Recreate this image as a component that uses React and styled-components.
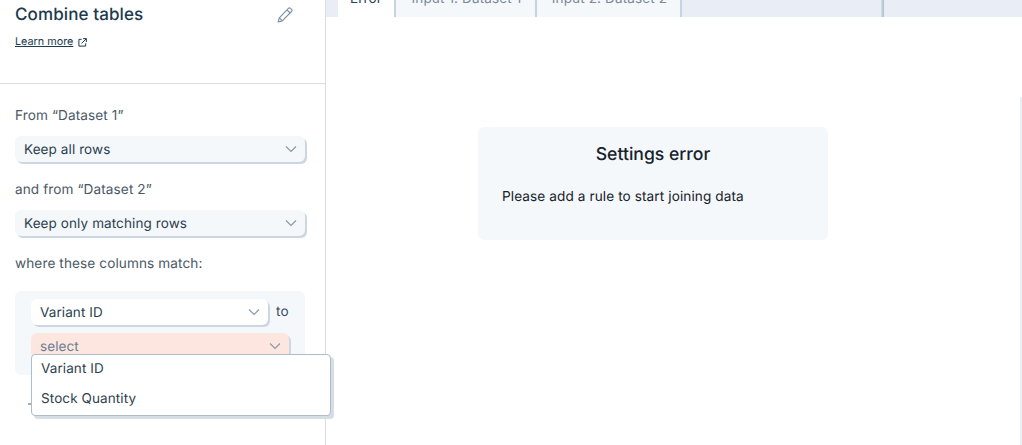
import React from "react";
import styled, { createGlobalStyle } from "styled-components";

const Global = createGlobalStyle`
  html, body { margin: 0; padding: 0; background: #fff; overflow: hidden; }
  body { font-family: Inter, "Liberation Sans", sans-serif; text-rendering: geometricPrecision; letter-spacing: 0.1px; }
`;

const Page = styled.div`
  display: flex;
  width: 1022px;
  height: 445px;
  overflow: hidden;
`;

const Sidebar = styled.aside`
  width: 325px;
  flex: none;
  border-right: 1px solid #d9dde1;
  display: flex;
  flex-direction: column;
`;

const Header = styled.header`
  height: 84px;
  flex: none;
  box-sizing: border-box;
  padding: 4px 32px 0 15px;
  border-bottom: 1px solid #d9dde1;
`;

const TitleRow = styled.div`
  display: flex;
  align-items: center;
  justify-content: space-between;
  height: 22px;
`;

const Title = styled.h1`
  margin: 0;
  font-size: 17px;
  font-weight: 500;
  line-height: 22px;
  color: #1d3a4e;
`;

const LearnRow = styled.div`
  display: flex;
  align-items: center;
  gap: 5px;
  margin-top: 9px;
  color: #1d3a4e;
`;

const LearnLink = styled.a`
  font-size: 10.8px;
  line-height: 14px;
  letter-spacing: 0;
  color: #1d3a4e;
  text-decoration: underline;
`;

const Form = styled.div`
  padding: 23px 0 0 15px;
  display: flex;
  flex-direction: column;
  align-items: flex-start;
`;

const Label = styled.div`
  font-size: 13.6px;
  line-height: 17px;
  padding-top: 1px;
  color: #4b5966;
  margin-bottom: ${(p) => p.$after}px;
`;

const Select = styled.div`
  box-sizing: border-box;
  width: ${(p) => p.$width}px;
  height: 26px;
  flex: none;
  display: flex;
  align-items: center;
  justify-content: space-between;
  padding: 0 8px 0 9px;
  font-size: 13.5px;
  color: ${(p) => (p.$placeholder ? "#6b7f93" : "#2c3f4f")};
  background: ${(p) => p.$bg};
  border-radius: 6px;
  box-shadow: 2px 2px 0 #cdd7e3;
  margin-bottom: ${(p) => p.$after || 0}px;
`;

const SelectValue = styled.span`
  padding-top: 2px;
`;

const RulePanel = styled.div`
  box-sizing: border-box;
  width: 290px;
  height: 84px;
  padding: 8px 0 0 16px;
  background: #f4f8fb;
  border-radius: 6px;
`;

const RuleRow = styled.div`
  display: flex;
  gap: 8px;
  margin-bottom: 8px;
`;

const To = styled.span`
  font-size: 13.6px;
  line-height: 26px;
  height: 26px;
  color: #3d4e5c;
`;

const MenuAnchor = styled.div`
  position: relative;
`;

const Menu = styled.div`
  position: absolute;
  left: 0;
  top: 21px;
  box-sizing: border-box;
  width: 300px;
  height: 62px;
  padding: 0 9px;
  background: #fff;
  border: 1px solid #aebccb;
  border-radius: 4px;
  box-shadow: 3px 3px 0 #d5dde7;
  z-index: 2;
`;

const MenuList = styled.div`
  margin-top: -1px;
`;

const MenuItem = styled.div`
  height: 30px;
  display: flex;
  align-items: center;
  font-size: 13.5px;
  color: #2f4150;
`;

const AddRule = styled.div`
  margin: 23px 0 0 12px;
  height: 12px;
  display: flex;
  align-items: center;
  color: #47617a;
`;

const Main = styled.main`
  flex: 1;
  min-width: 0;
  display: flex;
  flex-direction: column;
  position: relative;
`;

const TabBar = styled.nav`
  height: 35px;
  margin-top: -18px;
  flex: none;
  display: flex;
  padding-left: 12px;
  background: #e9eef6;
`;

const Tab = styled.div`
  box-sizing: border-box;
  width: ${(p) => p.$width}px;
  display: flex;
  justify-content: center;
  align-items: center;
  padding: 0 0 1px ${(p) => (p.$active ? 0 : 2)}px;
  font-size: 13.6px;
  color: ${(p) => (p.$active ? "#2c3f4f" : "#7c8a99")};
  background: ${(p) => (p.$active ? "#fff" : "#f4f8fb")};
  border-right: 2px solid #c8d3e1;
`;

const BarDivider = styled.div`
  width: 3px;
  margin-left: 199px;
  background: linear-gradient(90deg, #d8e2ea, #a9bac8);
`;

const Body = styled.div`
  flex: 1;
  display: flex;
  justify-content: flex-start;
  padding: 110px 0 0 152px;
`;

const ErrorCard = styled.section`
  box-sizing: border-box;
  width: 350px;
  height: 113px;
  padding: 18px 24px 0;
  background: #f4f8fb;
  border-radius: 6px;
  color: #16222c;
`;

const ErrorTitle = styled.h2`
  margin: 0 0 24px;
  text-align: center;
  font-size: 17.6px;
  font-weight: 500;
  line-height: 20px;
  letter-spacing: 0;
`;

const ErrorText = styled.p`
  margin: 0;
  font-size: 13.6px;
  line-height: 17px;
`;

const Scrollbar = styled.div`
  position: absolute;
  right: 0;
  top: 97px;
  bottom: 0;
  width: 2px;
  background: #eceff2;
`;

const Chevron = () => (
  <svg width="12" height="8" viewBox="0 0 12 8" fill="none" stroke="#8797a6" strokeWidth="1.1">
    <path d="M1 1.5 6 6.5 11 1.5" />
  </svg>
);

const Pencil = () => (
  <svg width="16" height="16" viewBox="0 0 16 16" fill="none" stroke="#7f93a6" strokeWidth="1.2" strokeLinejoin="round">
    <path d="M11.4 1.4a1.5 1.5 0 0 1 2.1 0l1 1a1.5 1.5 0 0 1 0 2.1L5.3 13.8 1.2 15l1.1-4.2z" />
    <path d="M10 2.9 13.1 6M2.4 10.8l3 3" />
  </svg>
);

const External = () => (
  <svg width="9" height="9" viewBox="0 0 10 10" fill="none" stroke="#1d3a4e" strokeWidth="1.1">
    <path d="M4 1.5H1v7.5h7.5V6" />
    <path d="M5.5.7h3.8v3.8M9.2.8 4 6" />
  </svg>
);

const Plus = () => (
  <svg width="12" height="12" viewBox="0 0 12 12" fill="none" stroke="currentColor" strokeWidth="1.2">
    <path d="M6 1v10M1 6h10" />
  </svg>
);

export default function App() {
  return (
    <Page>
      <Global />
      <Sidebar>
        <Header>
          <TitleRow>
            <Title>Combine tables</Title>
            <Pencil />
          </TitleRow>
          <LearnRow>
            <LearnLink>Learn more</LearnLink>
            <External />
          </LearnRow>
        </Header>
        <Form>
          <Label $after={11}>From “Dataset 1”</Label>
          <Select $width={290} $bg="#f4f8fb" $after={19}>
            <SelectValue>Keep all rows</SelectValue>
            <Chevron />
          </Select>
          <Label $after={11}>and from “Dataset 2”</Label>
          <Select $width={290} $bg="#f4f8fb" $after={19}>
            <SelectValue>Keep only matching rows</SelectValue>
            <Chevron />
          </Select>
          <Label $after={18}>where these columns match:</Label>
          <RulePanel>
            <RuleRow>
              <Select $width={237} $bg="#fff">
                <SelectValue>Variant ID</SelectValue>
                <Chevron />
              </Select>
              <To>to</To>
            </RuleRow>
            <MenuAnchor>
              <Select $width={258} $bg="#fde6e0" $placeholder>
                <SelectValue>select</SelectValue>
                <Chevron />
              </Select>
              <Menu>
                <MenuList>
                  <MenuItem>Variant ID</MenuItem>
                  <MenuItem>Stock Quantity</MenuItem>
                </MenuList>
              </Menu>
            </MenuAnchor>
          </RulePanel>
          <AddRule>
            <Plus />
          </AddRule>
        </Form>
      </Sidebar>
      <Main>
        <TabBar>
          <Tab $active $width={58}>Error</Tab>
          <Tab $width={141}>Input 1: Dataset 1</Tab>
          <Tab $width={145}>Input 2: Dataset 2</Tab>
          <BarDivider />
        </TabBar>
        <Body>
          <ErrorCard>
            <ErrorTitle>Settings error</ErrorTitle>
            <ErrorText>Please add a rule to start joining data</ErrorText>
          </ErrorCard>
        </Body>
        <Scrollbar />
      </Main>
    </Page>
  );
}
